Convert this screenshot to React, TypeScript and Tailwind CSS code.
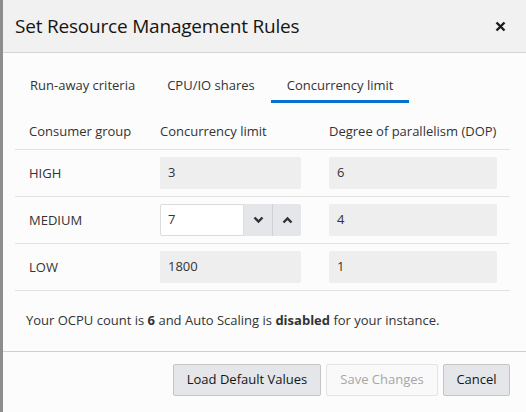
import React from "react";

const font = { fontFamily: '"Open Sans", "Noto Sans", sans-serif' };

function Chevron({ up }: { up?: boolean }) {
  return (
    <svg width="11" height="8" viewBox="0 0 11 8">
      <path
        d={up ? "M1.5 6.5 L5.5 2.5 L9.5 6.5" : "M1.5 1.5 L5.5 5.5 L9.5 1.5"}
        fill="none"
        stroke="#2f3136"
        strokeWidth="2.4"
      />
    </svg>
  );
}

function Field({ value, w }: { value: string; w: string }) {
  return (
    <div className={`${w} h-[32px] bg-[#eeeeee] rounded-[2px] flex items-center pl-[8px] text-[#333]`}>
      {value}
    </div>
  );
}

export default function App() {
  const rows = [
    { g: "HIGH", c: "3", d: "6" },
    { g: "MEDIUM", c: "7", d: "4", edit: true },
    { g: "LOW", c: "1800", d: "1" },
  ];
  return (
    <div
      className="w-[526px] h-[412px] bg-[#fcfcfc] border-l-[3px] border-[#8d8d8d] flex flex-col text-[13px] text-[#333]"
      style={font}
    >
      <div className="h-[53px] shrink-0 bg-[#f1f1f1] border-b border-[#d4d4d4] flex items-center justify-between pl-[12px] pr-[20px]">
        <div className="text-[19px] text-[#161513] tracking-[-0.2px]">Set Resource Management Rules</div>
        <svg width="11" height="11" viewBox="0 0 11 11">
          <path d="M1.5 1.5 L9.5 9.5 M9.5 1.5 L1.5 9.5" stroke="#1c1c1c" strokeWidth="2.4" />
        </svg>
      </div>
      <div className="flex pl-[11px] h-[50px] items-end">
        {["Run-away criteria", "CPU/IO shares", "Concurrency limit"].map((t, i) => (
          <div
            key={t}
            className={`px-[16px] h-[50px] flex items-end pb-[5px] border-b-[3px] ${
              i === 2 ? "border-[#0572ce]" : "border-transparent"
            } text-[#333]`}
          >
            {t}
          </div>
        ))}
      </div>
      <div className="mx-[12px] w-[495px]">
        <div className="flex h-[47px] items-end pb-[8px] border-b border-[#e2e2e2]">
          <div className="w-[145px] pl-[14px]">Consumer group</div>
          <div className="w-[169px]">Concurrency limit</div>
          <div className="w-[181px]">Degree of parallelism (DOP)</div>
        </div>
        {rows.map((r) => (
          <div key={r.g} className="flex h-[47px] items-center border-b border-[#e2e2e2]">
            <div className="w-[145px] pl-[14px] pt-[2px]">{r.g}</div>
            <div className="w-[169px]">
              {r.edit ? (
                <div className="w-[141px] h-[32px] flex">
                  <div className="w-[84px] h-full bg-white border border-[#dcdcdc] rounded-l-[2px] flex items-center pl-[7px]">
                    {r.c}
                  </div>
                  <div className="w-[29px] h-full bg-[#e4e6e9] border-r border-[#cfd1d4] flex items-center justify-center">
                    <Chevron />
                  </div>
                  <div className="w-[28px] h-full bg-[#e4e6e9] rounded-r-[2px] flex items-center justify-center">
                    <Chevron up />
                  </div>
                </div>
              ) : (
                <Field value={r.c} w="w-[141px]" />
              )}
            </div>
            <div className="w-[181px]">
              <Field value={r.d} w="w-[168px]" />
            </div>
          </div>
        ))}
      </div>
      <div className="h-[60px] flex items-center pl-[23px]">
        <span>
          Your OCPU count is <b className="font-bold">6</b> and Auto Scaling is{" "}
          <b className="font-bold">disabled</b> for your instance.
        </span>
      </div>
      <div className="flex-1 border-t border-[#d0d0d0] flex justify-end items-start pt-[12px] pr-[16px] gap-[5px]">
        <button className="h-[32px] w-[148px] bg-[#e4e6e9] border border-[#c4c4c4] rounded-[2px] text-[#161513]">
          Load Default Values
        </button>
        <button className="h-[32px] w-[112px] bg-[#f9f9f9] border border-[#e4e4e4] rounded-[2px] text-[#a6a6a6]">
          Save Changes
        </button>
        <button className="h-[32px] w-[67px] bg-[#e4e6e9] border border-[#c4c4c4] rounded-[2px] text-[#161513]">
          Cancel
        </button>
      </div>
    </div>
  );
}
